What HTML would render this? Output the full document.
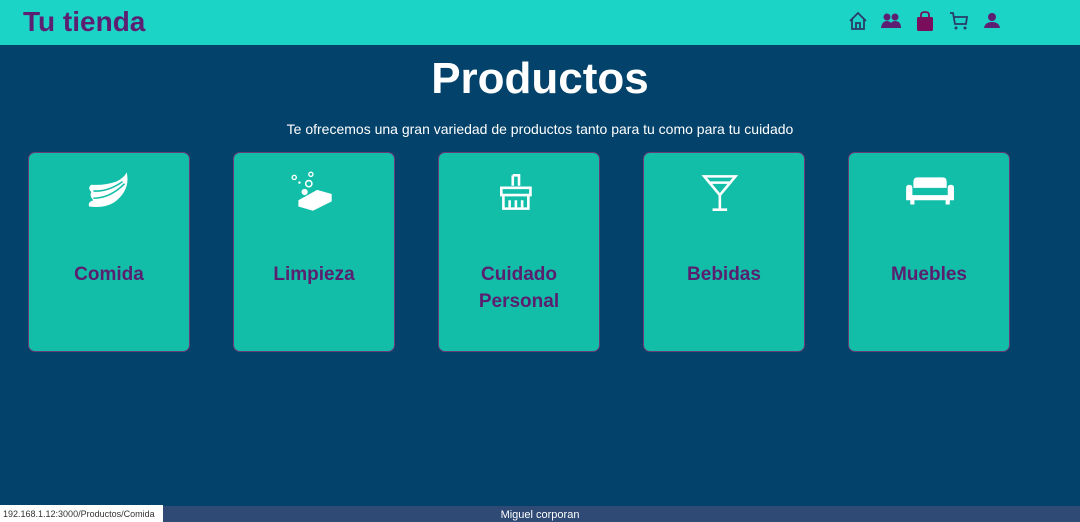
<!DOCTYPE html>
<html><head><meta charset="utf-8"><style>
*{margin:0;padding:0;box-sizing:border-box}
html,body{width:1080px;height:522px;overflow:hidden}
body{background:#03426a;font-family:"Liberation Sans",sans-serif;position:relative}
.hdr{position:absolute;left:0;top:0;width:1080px;height:45px;background:#1bd4c5}
.logo{position:absolute;left:23px;top:6px;font-size:28px;font-weight:bold;color:#5c1f72}
.ic{position:absolute;top:11px}
h1{position:absolute;top:54px;width:1080px;text-align:center;color:#fff;font-size:44px;font-weight:bold}
.sub{position:absolute;top:121px;width:1080px;text-align:center;color:#fff;font-size:14px}
.card{position:absolute;top:152px;width:162px;height:200px;background:#12bea8;border:1.5px solid #6a3a7a;border-radius:7px}
.card svg{position:absolute;left:54px;top:16px}
.card .t{position:absolute;top:108px;width:100%;text-align:center;color:#5a2070;font-weight:bold;font-size:19px;line-height:27px}
.foot{position:absolute;left:0;top:506px;width:1080px;height:16px;background:#2f4a74;color:#fff;font-size:11px;text-align:center;line-height:19px}
.url{position:absolute;left:0;top:505px;height:17px;width:163px;background:#fff;color:#333;font-size:9px;line-height:18px;padding-left:3px}
</style></head><body>
<div class="hdr">
<div class="logo">Tu tienda</div>
<svg class="ic" style="left:848px" width="20" height="20" viewBox="0 0 20 20"><path d="M2 10L10 2L18 10M4 8V18H16V8M8 18V12H12V18" fill="none" stroke="#2a3a6a" stroke-width="1.8"/></svg>
<svg class="ic" style="left:880px" width="22" height="20" viewBox="0 0 22 20"><circle cx="7" cy="6" r="3.5" fill="#5c1f72"/><circle cx="15" cy="6" r="3.5" fill="#5c1f72"/><path d="M1 17Q2 10 7 10Q12 10 13 17ZM10 17Q10 10 15 10Q21 10 21 17Z" fill="#5c1f72"/></svg>
<svg class="ic" style="left:915px" width="20" height="22" viewBox="0 0 20 22"><path d="M6 6V4Q6 1 10 1Q14 1 14 4V6" fill="none" stroke="#7a0e5c" stroke-width="1.8"/><rect x="2" y="6" width="16" height="14" rx="1.5" fill="#7a0e5c"/></svg>
<svg class="ic" style="left:949px" width="20" height="20" viewBox="0 0 20 20"><path d="M1 2H4L6 13H17L18 6H5" fill="none" stroke="#2a3a6a" stroke-width="1.8"/><circle cx="7" cy="17" r="1.5" fill="#2a3a6a"/><circle cx="16" cy="17" r="1.5" fill="#2a3a6a"/></svg>
<svg class="ic" style="left:983px" width="18" height="20" viewBox="0 0 18 20"><circle cx="9" cy="6" r="4" fill="#5c1f72"/><path d="M1 17Q2 11 9 11Q16 11 17 17Z" fill="#5c1f72"/></svg>
</div>
<h1>Productos</h1>
<div class="sub">Te ofrecemos una gran variedad de productos tanto para tu como para tu cuidado</div>

<div class="card" style="left:28px"><svg width="52" height="47" viewBox="0 0 50 45"><path d="M42 3Q46 20 30 32Q20 38 6 36Q4 32 10 30Q6 26 8 22Q4 18 8 15Q20 16 32 12Q40 8 42 3Z" fill="#fff"/><path d="M10 21Q24 22 38 12M10 28Q26 28 40 14" stroke="#12bea8" stroke-width="1.5" fill="none"/></svg><div class="t">Comida</div></div>
<div class="card" style="left:233px"><svg width="52" height="47" viewBox="0 0 50 45"><circle cx="6" cy="8" r="2" fill="none" stroke="#fff" stroke-width="1.3"/><circle cx="22" cy="5" r="2" fill="none" stroke="#fff" stroke-width="1.3"/><circle cx="20" cy="14" r="3" fill="none" stroke="#fff" stroke-width="1.5"/><circle cx="11" cy="13" r="1.2" fill="#fff"/><circle cx="16" cy="22" r="3" fill="#fff"/><path d="M10 30L28 20L42 24V31L24 40L10 36Z" fill="#fff"/></svg><div class="t">Limpieza</div></div>
<div class="card" style="left:438px"><svg width="52" height="47" viewBox="0 0 50 45"><path d="M19 6H25V16M19 6V16" fill="none" stroke="#fff" stroke-width="2.5"/><path d="M8 18H36V25H8ZM10 25V38H34V25M16 30V38M22 30V38M28 30V38" fill="none" stroke="#fff" stroke-width="2.5"/></svg><div class="t">Cuidado<br>Personal</div></div>
<div class="card" style="left:643px"><svg width="52" height="47" viewBox="0 0 50 45"><path d="M6 7H36L21 25ZM21 25V38M14 39H28M10 13H32" fill="none" stroke="#fff" stroke-width="2.5"/></svg><div class="t">Bebidas</div></div>
<div class="card" style="left:848px"><svg width="52" height="47" viewBox="0 0 50 45"><path d="M10 12Q10 8 14 8H38Q42 8 42 12V18H10Z" fill="#fff"/><path d="M3 18Q3 15 6 15Q9 15 9 18V25H43V18Q43 15 46 15Q49 15 49 18V30H45V34H41V30H11V34H7V30H3Z" fill="#fff"/></svg><div class="t">Muebles</div></div>

<div class="foot">Miguel corporan</div>
<div class="url">192.168.1.12:3000/Productos/Comida</div>
</body></html>
